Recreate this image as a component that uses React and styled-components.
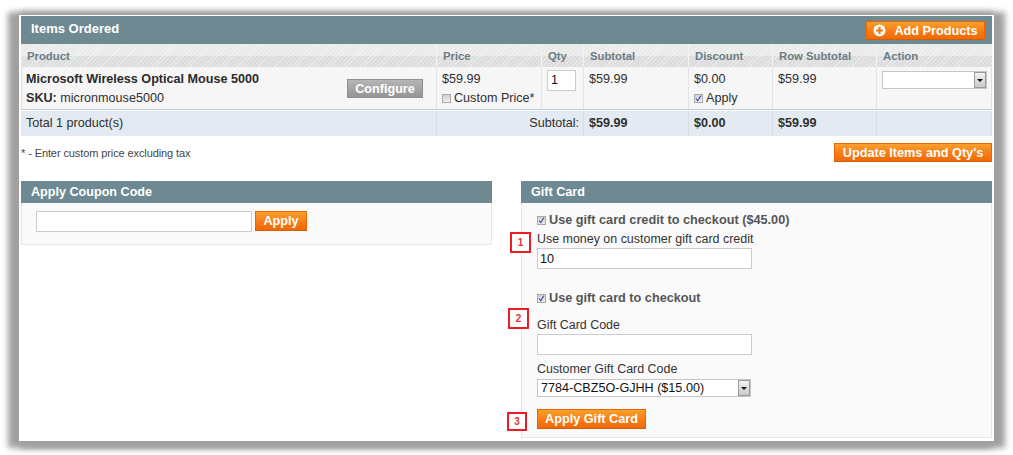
import React from 'react';
import styled, { createGlobalStyle } from 'styled-components';

const GlobalStyle = createGlobalStyle`
  html, body {
    margin: 0;
    padding: 0;
    background: #fff;
    overflow: hidden;
  }
  body {
    font-family: "Liberation Sans", Arial, sans-serif;
    font-size: 12.6px;
    color: #2f2f2f;
  }
`;

const Page = styled.div`
  width: 1013px;
  height: 455px;
  padding: 15px 19px 14px;
  box-sizing: border-box;
`;

const Sheet = styled.div`
  position: relative;
  width: 975px;
  height: 426px;
  padding: 1px 2px;
  box-sizing: border-box;
  background: #fff;
  box-shadow: -6px 2px 6px 5px #a0a0a0, 6px 2px 6px 5px #a0a0a0;
`;

const TitleBar = styled.div`
  display: flex;
  align-items: ${p => (p.$big ? 'flex-start' : 'center')};
  justify-content: space-between;
  height: ${p => (p.$big ? 28 : 22)}px;
  padding: ${p => (p.$big ? '5px 7px 0 10px' : '0 10px')};
  box-sizing: border-box;
  background: #6f8992;
  color: #fff;
  font-size: ${p => (p.$big ? 13 : 12.6)}px;
  font-weight: bold;
`;

const OrangeButton = styled.button`
  display: inline-flex;
  align-items: center;
  justify-content: center;
  gap: ${p => p.$gap || 0}px;
  width: ${p => p.$width}px;
  height: ${p => p.$height || 19}px;
  margin: ${p => p.$top || 0}px 0 0;
  padding: 0;
  border: 1px solid #ed6502;
  border-bottom-color: #d85c02;
  background: linear-gradient(#f9a02c, #f77c16 55%, #ee6a06);
  color: #fff;
  font-family: inherit;
  font-size: 12.7px;
  font-weight: bold;
  white-space: nowrap;
`;

const GridRow = styled.div`
  display: grid;
  grid-template-columns: 416px 105px 42px 105px 84px 104px 115px;
  height: ${p => p.$height}px;
  box-sizing: border-box;
`;

const HeadRow = styled(GridRow)`
  background:
    repeating-linear-gradient(135deg, rgba(255, 255, 255, 0.4) 0 1px, rgba(255, 255, 255, 0) 1px 3px),
    linear-gradient(#e9e9e9 0 12px, #dcdcdc 12px 23px);
`;

const HeadCell = styled.div`
  padding: 6px 6px 0;
  border-right: 1px solid #f4f4f4;
  color: #6a7d85;
  font-weight: bold;
  font-size: 11.3px;
  &:last-child { border-right: 0; }
`;

const BodyRow = styled(GridRow)`
  background: #f6f6f6;
  box-shadow: inset 1px 0 #dadfe0, inset -1px 0 #dadfe0;
  border-bottom: 1px solid #c2cbd0;
`;

const BodyCell = styled.div`
  display: flex;
  flex-direction: column;
  gap: 6px;
  padding: 6px 5px 0;
  border-right: 1px solid #e4e4e4;
  line-height: 13px;
  &:last-child { border-right: 0; }
`;

const ProductCell = styled(BodyCell)`
  position: relative;
`;

const ProductName = styled.div`
  font-weight: bold;
  color: #2b2b2b;
`;

const ConfigureButton = styled.button`
  position: absolute;
  top: 12px;
  right: 13px;
  width: 76px;
  height: 19px;
  margin: 0;
  padding: 0;
  border: 1px solid #8e8e8e;
  background: linear-gradient(#b6b6b6, #959595);
  color: #fff;
  font-family: inherit;
  font-size: 12.6px;
  font-weight: bold;
`;

const CheckLine = styled.label`
  display: flex;
  align-items: center;
  gap: 3px;
  margin-top: ${p => p.$top || 0}px;
  color: ${p => p.$color || 'inherit'};
  font-weight: ${p => (p.$bold ? 'bold' : 'normal')};
  font-size: ${p => p.$size || 12.6}px;
`;

const Box = styled.span`
  display: inline-flex;
  align-items: center;
  justify-content: center;
  width: 9px;
  height: 9px;
  box-sizing: border-box;
  flex: none;
  border: 1px solid #a9a9a9;
  background: linear-gradient(#d2d2d2, #eeeeee);
`;

const QtyInput = styled.div`
  width: 29px;
  height: 21px;
  margin-top: -3px;
  padding: 2px 3px;
  box-sizing: border-box;
  border: 1px solid #ccc;
  background: #fff;
  color: #111;
  line-height: 15px;
`;

const Picker = styled.div`
  display: flex;
  justify-content: space-between;
  align-items: center;
  width: ${p => p.$width}px;
  height: 18px;
  margin-top: ${p => p.$top || 0}px;
  box-sizing: border-box;
  border: 1px solid #c6c6c6;
  background: #fff;
  color: #111;
  padding-left: 3px;
`;

const PickerArrow = styled.span`
  display: flex;
  align-items: center;
  justify-content: center;
  width: 12px;
  height: 100%;
  box-sizing: border-box;
  border: 1px solid #9a9a9a;
  background: linear-gradient(#f2f2f2, #c9c9c9);
  &::after {
    content: '';
    border: 3px solid transparent;
    border-top: 3px solid #111;
    border-bottom: 0;
  }
`;

const TotalRow = styled(GridRow)`
  margin-top: 1px;
  background: #e3eaf1;
  box-shadow: inset -1px 0 #dadfe0;
`;

const TotalCell = styled.div`
  padding: 6px ${p => (p.$right ? 4 : 5)}px 0 5px;
  border-right: 1px solid #d7dee5;
  text-align: ${p => (p.$right ? 'right' : 'left')};
  font-weight: ${p => (p.$bold ? 'bold' : 'normal')};
  grid-column: ${p => p.$span || 'auto'};
  line-height: 13px;
  &:last-child { border-right: 0; }
`;

const NoteRow = styled.div`
  display: flex;
  justify-content: space-between;
  align-items: center;
  height: 19px;
  margin-top: 7px;
`;

const Note = styled.div`
  font-size: 11px;
  color: #444;
  letter-spacing: -0.1px;
`;

const Columns = styled.div`
  display: grid;
  grid-template-columns: 471px 471px;
  column-gap: 29px;
  align-items: start;
  margin-top: 19px;
`;

const CouponBody = styled.div`
  display: flex;
  gap: 3px;
  height: 42px;
  padding: 8px 14px 0;
  box-sizing: border-box;
  background: #fafafa;
  border: 1px solid #e6e6e6;
  border-top: 0;
`;

const TextBox = styled.div`
  width: ${p => p.$width}px;
  height: 21px;
  box-sizing: border-box;
  border: 1px solid #ccc;
  background: #fff;
  color: #111;
  padding: 3px 2px 1px;
  line-height: 15px;
`;

const GiftBody = styled.div`
  height: 235px;
  padding: 10px 15px 0;
  box-sizing: border-box;
  background: #fafafa;
  border: 1px solid #e6e6e6;
  border-top: 0;
  line-height: 14px;
`;

const FieldLabel = styled.div`
  margin: ${p => p.$top || 0}px 0 2px;
  color: #333;
  font-size: 12.45px;
`;

const Callout = styled.div`
  position: absolute;
  left: ${p => p.$left}px;
  top: ${p => p.$top}px;
  width: ${p => p.$w}px;
  height: ${p => p.$h}px;
  box-sizing: border-box;
  display: flex;
  align-items: center;
  justify-content: center;
  border: 2px solid #ee1c25;
  background: #fff;
  color: #e8303a;
  font-size: 10px;
  font-weight: bold;
`;

const Checked = () => (
  <Box>
    <svg width="7" height="7" viewBox="0 0 7 7">
      <path d="M1 3.5 L2.8 5.8 L5.8 0.8" fill="none" stroke="#3f4f9a" strokeWidth="1.2" />
    </svg>
  </Box>
);

const PlusIcon = () => (
  <svg width="13" height="13" viewBox="0 0 13 13">
    <circle cx="6.5" cy="6.5" r="6" fill="#fff" />
    <path d="M6.5 3 V10 M3 6.5 H10" stroke="#f07a12" strokeWidth="2.2" />
  </svg>
);

const headers = ['Product', 'Price', 'Qty', 'Subtotal', 'Discount', 'Row Subtotal', 'Action'];

export default function App() {
  return (
    <Page>
      <GlobalStyle />
      <Sheet>
        <TitleBar $big>
          <span>Items Ordered</span>
          <OrangeButton $width={119} $gap={8}>
            <PlusIcon />
            Add Products
          </OrangeButton>
        </TitleBar>

        <HeadRow $height={23}>
          {headers.map(h => (
            <HeadCell key={h}>{h}</HeadCell>
          ))}
        </HeadRow>

        <BodyRow $height={43}>
          <ProductCell>
            <ProductName>Microsoft Wireless Optical Mouse 5000</ProductName>
            <div><b>SKU:</b> micronmouse5000</div>
            <ConfigureButton>Configure</ConfigureButton>
          </ProductCell>
          <BodyCell>
            <div>$59.99</div>
            <CheckLine><Box />Custom Price*</CheckLine>
          </BodyCell>
          <BodyCell><QtyInput>1</QtyInput></BodyCell>
          <BodyCell><div>$59.99</div></BodyCell>
          <BodyCell>
            <div>$0.00</div>
            <CheckLine><Checked />Apply</CheckLine>
          </BodyCell>
          <BodyCell><div>$59.99</div></BodyCell>
          <BodyCell>
            <Picker $width={105} $top={-2}>
              <span />
              <PickerArrow />
            </Picker>
          </BodyCell>
        </BodyRow>

        <TotalRow $height={25}>
          <TotalCell>Total 1 product(s)</TotalCell>
          <TotalCell $right $span="span 2">Subtotal:</TotalCell>
          <TotalCell $bold>$59.99</TotalCell>
          <TotalCell $bold>$0.00</TotalCell>
          <TotalCell $bold>$59.99</TotalCell>
          <TotalCell />
        </TotalRow>

        <NoteRow>
          <Note>* - Enter custom price excluding tax</Note>
          <OrangeButton $width={158}>Update Items and Qty's</OrangeButton>
        </NoteRow>

        <Columns>
          <div>
            <TitleBar>Apply Coupon Code</TitleBar>
            <CouponBody>
              <TextBox $width={216} />
              <OrangeButton $width={52} $height={20}>Apply</OrangeButton>
            </CouponBody>
          </div>
          <div>
            <TitleBar>Gift Card</TitleBar>
            <GiftBody>
              <CheckLine $bold $size={12.7} $color="#555"><Checked />Use gift card credit to checkout ($45.00)</CheckLine>
              <FieldLabel $top={5}>Use money on customer gift card credit</FieldLabel>
              <TextBox $width={215}>10</TextBox>
              <CheckLine $bold $size={12.7} $color="#555" $top={22}><Checked />Use gift card to checkout</CheckLine>
              <FieldLabel $top={13}>Gift Card Code</FieldLabel>
              <TextBox $width={215} />
              <FieldLabel $top={7}>Customer Gift Card Code</FieldLabel>
              <Picker $width={214} $top={3}>
                <span>7784-CBZ5O-GJHH ($15.00)</span>
                <PickerArrow />
              </Picker>
              <OrangeButton $width={109} $height={20} $top={12}>Apply Gift Card</OrangeButton>
            </GiftBody>
          </div>
        </Columns>

        <Callout $left={491} $top={217} $w={21} $h={21}>1</Callout>
        <Callout $left={489} $top={293} $w={21} $h={21}>2</Callout>
        <Callout $left={488} $top={397} $w={20} $h={19}>3</Callout>
      </Sheet>
    </Page>
  );
}
